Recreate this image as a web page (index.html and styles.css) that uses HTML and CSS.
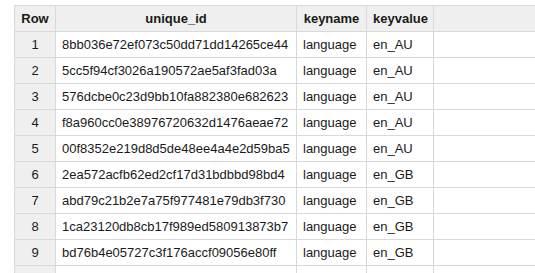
FILE: index.html
```html
<!DOCTYPE html>
<html lang="en">
<head>
    <meta charset="UTF-8">
    <title>Query results</title>
    <link rel="stylesheet" href="styles.css">
</head>
<body>
    <div class="results">
        <table class="result-table">
            <colgroup>
                <col class="col-row">
                <col class="col-id">
                <col class="col-name">
                <col class="col-value">
                <col class="col-rest">
            </colgroup>
            <thead>
                <tr>
                    <th>Row</th>
                    <th>unique_id</th>
                    <th>keyname</th>
                    <th>keyvalue</th>
                    <th></th>
                </tr>
            </thead>
            <tbody>
                <tr><td class="row-num">1</td><td>8bb036e72ef073c50dd71dd14265ce44</td><td>language</td><td>en_AU</td><td></td></tr>
                <tr><td class="row-num">2</td><td>5cc5f94cf3026a190572ae5af3fad03a</td><td>language</td><td>en_AU</td><td></td></tr>
                <tr><td class="row-num">3</td><td>576dcbe0c23d9bb10fa882380e682623</td><td>language</td><td>en_AU</td><td></td></tr>
                <tr><td class="row-num">4</td><td>f8a960cc0e38976720632d1476aeae72</td><td>language</td><td>en_AU</td><td></td></tr>
                <tr><td class="row-num">5</td><td>00f8352e219d8d5de48ee4a4e2d59ba5</td><td>language</td><td>en_AU</td><td></td></tr>
                <tr><td class="row-num">6</td><td>2ea572acfb62ed2cf17d31bdbbd98bd4</td><td>language</td><td>en_GB</td><td></td></tr>
                <tr><td class="row-num">7</td><td>abd79c21b2e7a75f977481e79db3f730</td><td>language</td><td>en_GB</td><td></td></tr>
                <tr><td class="row-num">8</td><td>1ca23120db8cb17f989ed580913873b7</td><td>language</td><td>en_GB</td><td></td></tr>
                <tr><td class="row-num">9</td><td>bd76b4e05727c3f176accf09056e80ff</td><td>language</td><td>en_GB</td><td></td></tr>
                <tr><td class="row-num"></td><td></td><td></td><td></td><td></td></tr>
            </tbody>
        </table>
    </div>
</body>
</html>
```

FILE: styles.css
```css
* {
    margin: 0;
    padding: 0;
    box-sizing: border-box;
}

body {
    font-family: 'Liberation Sans', Arial, sans-serif;
    font-size: 13px;
    color: #1a1a1a;
    background: #fff;
    overflow: hidden;
}

.results {
    padding: 5px 0 0 14px;
    height: 273px;
    overflow: hidden;
}

.result-table {
    border-collapse: collapse;
    table-layout: fixed;
    width: 521px;
}

.col-row { width: 41px; }
.col-id { width: 241px; }
.col-name { width: 70px; }
.col-value { width: 67px; }
.col-rest { width: 102px; }

.result-table th,
.result-table td {
    border: 1px solid #d9d9d9;
    height: 26px;
    padding: 0 6px;
    white-space: nowrap;
    overflow: hidden;
    vertical-align: middle;
    text-align: left;
}

.result-table th {
    background: #efefef;
    font-weight: bold;
    text-align: center;
}

.result-table th:last-child,
.result-table td:last-child {
    border-right: none;
}

.result-table td.row-num {
    background: #efefef;
    text-align: center;
}
```
